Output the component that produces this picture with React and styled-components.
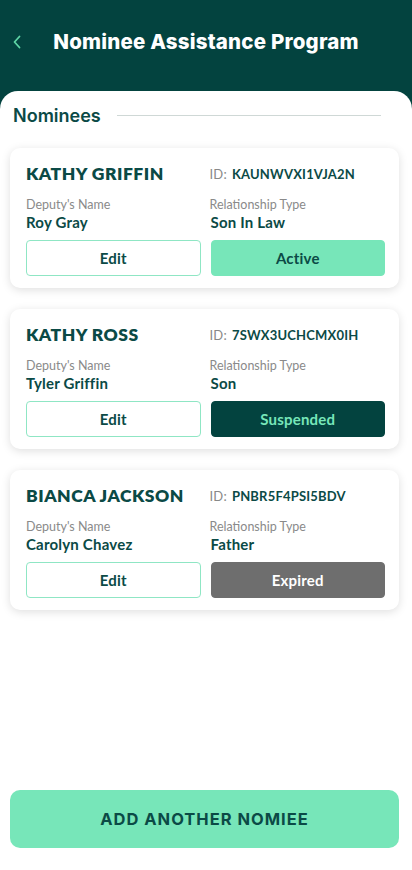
import React from "react"
import styled, { createGlobalStyle } from "styled-components"

const Global = createGlobalStyle`
  html, body {
    margin: 0;
    padding: 0;
    background: #ffffff;
  }
  body {
    font-family: "Lato", "Noto Sans", sans-serif;
    -webkit-font-smoothing: antialiased;
  }
`

const Screen = styled.div`
  min-height: 870px;
  display: flex;
  flex-direction: column;
  background: #03433f;
`

const Header = styled.header`
  height: 91px;
  display: flex;
  align-items: center;
  padding: 0 12px 8px;
  box-sizing: border-box;
`

const Back = styled.button`
  border: 0;
  background: none;
  padding: 0;
  width: 16px;
  height: 20px;
  display: flex;
  align-items: center;
  cursor: pointer;
`

const HeaderTitle = styled.h1`
  flex: 1;
  margin: 0;
  padding-right: 16px;
  text-align: center;
  color: #ffffff;
  font-family: "Inter", sans-serif;
  font-weight: 800;
  font-size: 20.5px;
  letter-spacing: 0.2px;
`

const Sheet = styled.main`
  flex: 1;
  background: #ffffff;
  border-radius: 18px 18px 0 0;
  display: flex;
  flex-direction: column;
  padding: 14px 13px 22px 10px;
`

const SectionHead = styled.div`
  display: flex;
  align-items: center;
  gap: 16px;
  padding: 0 18px 0 3px;
  margin-bottom: 22px;
`

const SectionTitle = styled.h2`
  margin: 0;
  font-family: "Inter", sans-serif;
  font-weight: 600;
  font-size: 18px;
  color: #0b4a46;
`

const Rule = styled.div`
  flex: 1;
  height: 1px;
  background: #cfd8d6;
`

const List = styled.div`
  display: flex;
  flex-direction: column;
  gap: 21px;
`

const Card = styled.section`
  background: #ffffff;
  border-radius: 10px;
  box-shadow: 0 2px 10px rgba(0, 0, 0, 0.13);
  padding: 14px 14px 12px 16px;
  display: grid;
  grid-template-columns: 1fr 1fr;
  column-gap: 10px;
`

const Name = styled.div`
  font-size: 17.5px;
  font-weight: 800;
  color: #0b4a46;
  line-height: 24px;
  letter-spacing: 0.5px;
  white-space: nowrap;
`

const Id = styled.div`
  line-height: 24px;
  font-size: 13px;
  color: #0b4a46;
  font-weight: 700;
  letter-spacing: 0.2px;
  margin-left: -1px;

  span {
    color: #888888;
    font-weight: 400;
    margin-right: 5px;
  }
`

const Field = styled.div`
  margin-top: 11px;
`

const Label = styled.div`
  font-size: 12.5px;
  line-height: 16px;
  color: #8a8a8a;
  margin-left: ${p => p.$right ? "-1px" : "0"};
`

const Value = styled.div`
  font-size: 15px;
  line-height: 18px;
  font-weight: 700;
  color: #0b4a46;
  letter-spacing: 0.2px;
`

const Button = styled.button`
  margin-top: 9px;
  height: 36px;
  border-radius: 4px;
  font-family: inherit;
  font-size: 15px;
  font-weight: 700;
  letter-spacing: 0.2px;
  cursor: pointer;
  border: 1px solid ${p => p.$outline ? "#8fe6c4" : p.$bg};
  background: ${p => p.$bg};
  color: ${p => p.$fg};
`

const AddButton = styled.button`
  margin-top: auto;
  height: 58px;
  border: 0;
  border-radius: 10px;
  background: #77e6b9;
  color: #0b4a46;
  font-family: "Inter", sans-serif;
  font-weight: 700;
  font-size: 16.5px;
  letter-spacing: 1px;
  cursor: pointer;
`

const statusColors = {
  Active: { bg: "#77e6b9", fg: "#0b4a46" },
  Suspended: { bg: "#03433f", fg: "#77e6b9" },
  Expired: { bg: "#6e6e6e", fg: "#ffffff" },
}

const nominees = [
  { name: "KATHY GRIFFIN", id: "KAUNWVXI1VJA2N", deputy: "Roy Gray", relation: "Son In Law", status: "Active" },
  { name: "KATHY ROSS", id: "7SWX3UCHCMX0IH", deputy: "Tyler Griffin", relation: "Son", status: "Suspended" },
  { name: "BIANCA JACKSON", id: "PNBR5F4PSI5BDV", deputy: "Carolyn Chavez", relation: "Father", status: "Expired" },
]

const ChevronLeft = () => (
  <svg width="10" height="16" viewBox="0 0 10 16" fill="none">
    <path d="M7.5 2.5 L2.5 8 L7.5 13.5" stroke="#5fd6a6" strokeWidth="1.8" strokeLinecap="round" strokeLinejoin="round" />
  </svg>
)

const NomineeCard = ({ name, id, deputy, relation, status }) => (
  <Card>
    <Name>{name}</Name>
    <Id><span>ID:</span>{id}</Id>
    <Field>
      <Label>Deputy's Name</Label>
      <Value>{deputy}</Value>
    </Field>
    <Field>
      <Label $right>Relationship Type</Label>
      <Value>{relation}</Value>
    </Field>
    <Button $outline $bg="#ffffff" $fg="#0b4a46">Edit</Button>
    <Button $bg={statusColors[status].bg} $fg={statusColors[status].fg}>{status}</Button>
  </Card>
)

export default function App() {
  return (
    <Screen>
      <Global />
      <Header>
        <Back aria-label="Back"><ChevronLeft /></Back>
        <HeaderTitle>Nominee Assistance Program</HeaderTitle>
      </Header>
      <Sheet>
        <SectionHead>
          <SectionTitle>Nominees</SectionTitle>
          <Rule />
        </SectionHead>
        <List>
          {nominees.map(n => <NomineeCard key={n.id} {...n} />)}
        </List>
        <AddButton>ADD ANOTHER NOMIEE</AddButton>
      </Sheet>
    </Screen>
  )
}
